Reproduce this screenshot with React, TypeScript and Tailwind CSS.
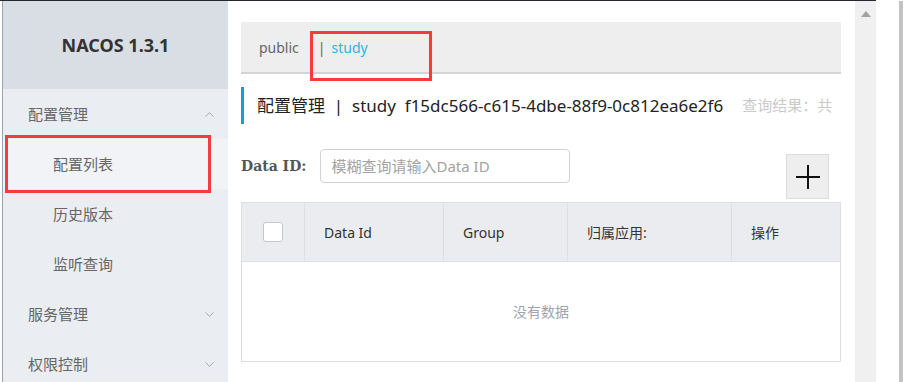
import React from 'react';
import { ChevronUp, ChevronDown } from 'lucide-react';

const font = { fontFamily: '"Noto Sans", "Noto Sans CJK SC", sans-serif' };

// Sidebar menu row
function MenuItem({ label, sub, active, open }: { label: string; sub?: boolean; active?: boolean; open?: boolean }) {
  return (
    <div
      className={`h-[50px] shrink-0 flex items-center justify-between pr-[11px] text-[15px] text-[#666] ${sub ? 'pl-[50px]' : 'pl-[25px]'} ${active ? 'bg-[#f2f3f7]' : ''}`}
    >
      <span>{label}</span>
      {open === true && <ChevronUp className="w-[15px] h-[15px] text-[#9a9a9a]" strokeWidth={1.3} />}
      {open === false && <ChevronDown className="w-[15px] h-[15px] text-[#9a9a9a]" strokeWidth={1.3} />}
    </div>
  );
}

export default function App() {
  return (
    <div className="w-[903px] h-[382px] overflow-hidden flex flex-col bg-white" style={font}>
      <div className="h-px shrink-0 bg-[#23272e] mr-[27px]" />
      <div className="flex flex-1 min-h-0">
        {/* left window edge */}
        <div className="w-[3px] bg-white border-r border-[#9aa3b0]" />

        {/* Sidebar */}
        <div className="w-[225px] bg-[#eaedf1] flex flex-col overflow-hidden">
          <div className="h-[88px] shrink-0 bg-[#d9dde4] flex items-center justify-center">
            <span className="text-[18px] font-bold text-[#333]">NACOS 1.3.1</span>
          </div>
          <MenuItem label="配置管理" open={true} />
          <div className="relative shrink-0">
            <MenuItem label="配置列表" sub active />
            <div className="absolute left-[2px] top-[-4px] w-[206px] h-[58px] border-[3px] border-[#f53b3b] pointer-events-none" />
          </div>
          <MenuItem label="历史版本" sub />
          <MenuItem label="监听查询" sub />
          <MenuItem label="服务管理" open={false} />
          <MenuItem label="权限控制" open={false} />
        </div>

        {/* Main */}
        <div className="flex-1 pl-[13px] pr-[14px]">
          <div className="mt-[21px] h-[52px] bg-[#eeeeee] border-b-2 border-[#d4d4d4] flex items-center pl-[18px] text-[14px] relative">
            <span className="text-[#666]">public</span>
            <span className="ml-[19px] text-[#666]">|</span>
            <span className="ml-[6px] text-[#2cb5df]">study</span>
            <div className="absolute left-[69px] top-[9px] w-[122px] h-[50px] border-[3px] border-[#f53b3b] pointer-events-none" />
          </div>

          <div className="mt-[13px] h-[37px] border-l-[3px] border-[#1a9ad6] flex items-center pl-[13px]">
            <span className="text-[17px] text-[#222]">配置管理&nbsp;&nbsp;|&nbsp;&nbsp;study&nbsp;&nbsp;f15dc566-c615-4dbe-88f9-0c812ea6e2f6</span>
            <span className="ml-[19px] text-[15px] text-[#cacaca]">查询结果：共</span>
          </div>

          <div className="mt-[25px] h-[53px] flex items-start">
            <div className="h-[34px] flex items-center">
              <span className="text-[14px] font-bold text-[#555]" style={{ fontFamily: '"DejaVu Serif", serif' }}>Data ID:</span>
              <div className="ml-[14px] w-[250px] h-[34px] border border-[#cfd2d8] rounded-[4px] flex items-center pl-[10px] text-[15px] text-[#a3a3a3]">
                模糊查询请输入Data ID
              </div>
            </div>
            <div className="ml-auto mr-[12px] mt-[5px] w-[43px] h-[45px] bg-[#eeeeee] border border-[#dcdcdc] flex items-center justify-center">
              <svg width="26" height="26" viewBox="0 0 26 26">
                <path d="M13 1 V25 M1 13 H25" stroke="#111" strokeWidth="2" />
              </svg>
            </div>
          </div>

          <div className="border border-[#dcdee3]">
            <div className="h-[58px] bg-[#ebecf0] flex text-[14px] text-[#333]">
              <div className="w-[63px] flex items-center justify-center border-r border-[#dcdee3]">
                <div className="w-[20px] h-[20px] bg-white border border-[#c4c6cf] rounded-[3px]" />
              </div>
              <div className="w-[139px] flex items-center pl-[19px] border-r border-[#dcdee3]">Data Id</div>
              <div className="w-[124px] flex items-center pl-[19px] border-r border-[#dcdee3]">Group</div>
              <div className="w-[164px] flex items-center pl-[19px] border-r border-[#dcdee3]">归属应用:</div>
              <div className="flex-1 flex items-center pl-[19px]">操作</div>
            </div>
            <div className="h-[100px] border-t border-[#dcdee3] flex items-center justify-center text-[14px] text-[#a0a3b0]">
              没有数据
            </div>
          </div>
        </div>

        {/* Scrollbar */}
        <div className="w-[21px] bg-[#f0f0f0] flex justify-center pt-[10px]">
          <svg width="10" height="6" viewBox="0 0 10 6">
            <path d="M5 0 L10 6 L0 6 Z" fill="#a3a3a3" />
          </svg>
        </div>
        <div className="w-[23px] bg-white" />
        <div className="w-[4px] bg-[#c2c2c2]" />
      </div>
    </div>
  );
}
